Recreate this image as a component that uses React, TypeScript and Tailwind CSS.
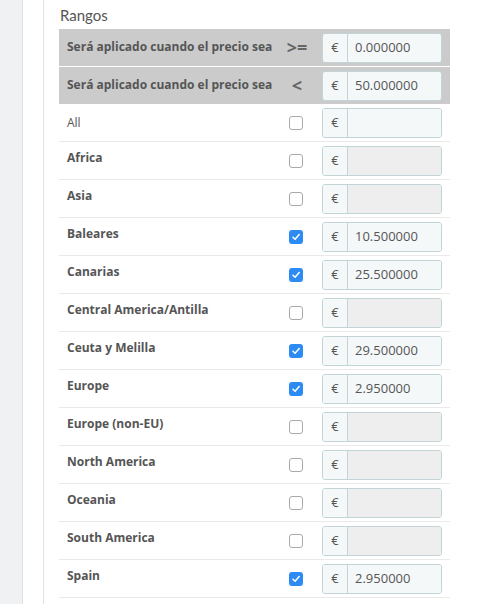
import React from 'react';

type Zone = { name: string; checked: boolean; value?: string; bold?: boolean };

const zones: Zone[] = [
  { name: 'All', checked: false, value: '', bold: false },
  { name: 'Africa', checked: false },
  { name: 'Asia', checked: false },
  { name: 'Baleares', checked: true, value: '10.500000' },
  { name: 'Canarias', checked: true, value: '25.500000' },
  { name: 'Central America/Antilla', checked: false },
  { name: 'Ceuta y Melilla', checked: true, value: '29.500000' },
  { name: 'Europe', checked: true, value: '2.950000' },
  { name: 'Europe (non-EU)', checked: false },
  { name: 'North America', checked: false },
  { name: 'Oceania', checked: false },
  { name: 'South America', checked: false },
  { name: 'Spain', checked: true, value: '2.950000' },
];

function PriceInput({ value, disabled }: { value?: string; disabled?: boolean }) {
  return (
    <div className="flex h-[30px] w-[120px] shrink-0 rounded-[3px] border border-[#c3d4d9] overflow-hidden">
      <span className="w-[25px] flex items-center justify-center bg-[#f5f8f9] border-r border-[#c3d4d9] text-[13px] text-[#555]">
        €
      </span>
      <span
        className={`flex-1 flex items-center pl-[7px] text-[13px] text-[#555] ${
          disabled ? 'bg-[#eeeeee]' : 'bg-[#f5f8f9]'
        }`}
      >
        {value}
      </span>
    </div>
  );
}

function Checkbox({ checked }: { checked: boolean }) {
  if (checked) {
    return (
      <span className="w-[14px] h-[14px] rounded-[3px] bg-[#2d8cf4] flex items-center justify-center">
        <svg width="10" height="10" viewBox="0 0 10 10" fill="none">
          <path d="M2 5.2 L4.1 7.3 L8.2 2.6" stroke="white" strokeWidth="1.5" strokeLinecap="round" strokeLinejoin="round" />
        </svg>
      </span>
    );
  }
  return <span className="w-[14px] h-[14px] rounded-[3px] border border-[#a9a9a9] bg-white" />;
}

export default function App() {
  return (
    <div
      className="w-[480px] h-[604px] flex bg-white overflow-hidden"
      style={{ fontFamily: '"Open Sans", "Liberation Sans", sans-serif' }}
    >
      <div className="w-[23px] shrink-0 bg-[#eff1f2] border-r border-[#dbe0e3]" />
      <div className="w-[21px] shrink-0 bg-white border-r border-[#e2e2e2]" />
      <div className="w-[406px] shrink-0 pl-[15px]">
        <h3
          className="pt-[5px] h-[29px] pl-[1px] text-[15px] text-[#555] leading-[20px]"
          style={{ fontFamily: 'Lato, "Open Sans", sans-serif' }}
        >
          Rangos
        </h3>
        <div className="w-[391px]">
          {[
            { op: '>=', value: '0.000000' },
            { op: '<', value: '50.000000' },
          ].map((h, i) => (
            <div
              key={h.op}
              className={`flex items-center px-2 bg-[#cbcbcb] ${i === 0 ? 'h-[38px] border-b border-white' : 'h-[37px]'}`}
            >
              <span className="flex-1 min-w-0 whitespace-nowrap text-[12px] font-bold text-[#555] pb-[1px]">
                Será aplicado cuando el precio sea
              </span>
              <span className="w-[54px] shrink-0 flex justify-center text-[18px] font-bold text-[#666] pl-[4px] leading-none pb-[2px]">
                {h.op}
              </span>
              <PriceInput value={h.value} />
            </div>
          ))}
          {zones.map((z) => (
            <div key={z.name} className="flex items-center h-[38px] px-2 border-b border-[#eaeaea]">
              <span
                className={`flex-1 text-[12px] text-[#555] ${z.bold === false ? 'font-normal pt-[1px]' : 'font-bold pb-[5px]'}`}
              >
                {z.name}
              </span>
              <span className="w-[54px] flex justify-center pl-[1px] pt-[1px]">
                <Checkbox checked={z.checked} />
              </span>
              <PriceInput value={z.value} disabled={z.value === undefined} />
            </div>
          ))}
        </div>
      </div>
    </div>
  );
}
